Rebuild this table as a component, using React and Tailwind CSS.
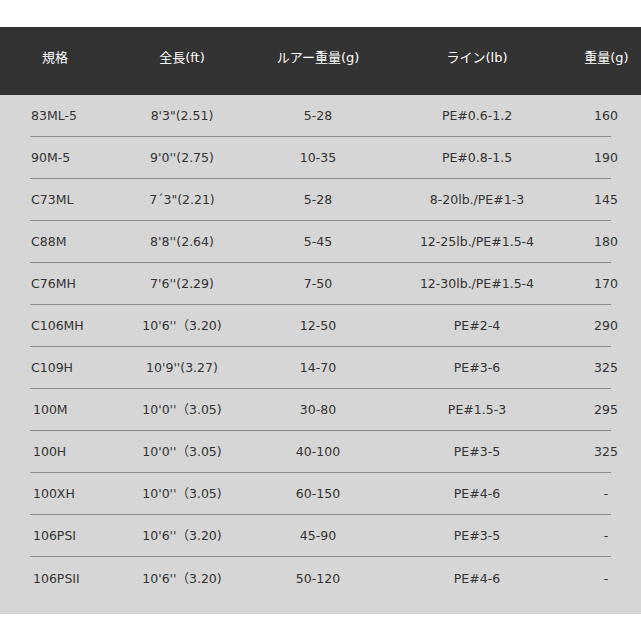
const rows = [
  ["83ML-5", "8'3\"(2.51)", "5-28", "PE#0.6-1.2", "160", false],
  ["90M-5", "9'0''(2.75)", "10-35", "PE#0.8-1.5", "190", false],
  ["C73ML", "7´3\"(2.21)", "5-28", "8-20lb./PE#1-3", "145", false],
  ["C88M", "8'8''(2.64)", "5-45", "12-25lb./PE#1.5-4", "180", false],
  ["C76MH", "7'6''(2.29)", "7-50", "12-30lb./PE#1.5-4", "170", false],
  ["C106MH", "10'6''（3.20)", "12-50", "PE#2-4", "290", false],
  ["C109H", "10'9''(3.27)", "14-70", "PE#3-6", "325", false],
  ["100M", "10'0''（3.05)", "30-80", "PE#1.5-3", "295", true],
  ["100H", "10'0''（3.05)", "40-100", "PE#3-5", "325", true],
  ["100XH", "10'0''（3.05)", "60-150", "PE#4-6", "-", true],
  ["106PSI", "10'6''（3.20)", "45-90", "PE#3-5", "-", true],
  ["106PSII", "10'6''（3.20)", "50-120", "PE#4-6", "-", true],
];

export default function App() {
  return (
    <div
      className="w-[641px] h-[641px] bg-white pt-[27px] text-[13px]"
      style={{ fontFamily: "Tahoma, 'DejaVu Sans', 'Noto Sans CJK JP', sans-serif" }}
    >
      <div className="grid grid-cols-[110px_144px_128px_190px_69px] h-[68px] items-center bg-[#333333] text-white pb-[6px]">
        <div className="text-center">規格</div>
        <div className="text-center">全長(ft)</div>
        <div className="text-center">ルアー重量(g)</div>
        <div className="text-center">ライン(lb)</div>
        <div className="text-center">重量(g)</div>
      </div>
      <div className="bg-[#d6d6d6] px-[30px] pb-[15px] text-[12.5px] text-[#333333]">
        {rows.map((r, i) => (
          <div
            key={i}
            className={
              "grid grid-cols-[80px_144px_128px_190px_57px] h-[42px] items-center pt-[2px] " +
              (i < rows.length - 1 ? "border-b border-[#8c8c8c]" : "")
            }
          >
            <div className={r[5] ? "pl-[3px]" : "pl-px"}>{r[0]}</div>
            <div className="text-center">{r[1]}</div>
            <div className="text-center">{r[2]}</div>
            <div className="text-center">{r[3]}</div>
            <div className="text-center pl-[11px]">{r[4]}</div>
          </div>
        ))}
      </div>
    </div>
  );
}
